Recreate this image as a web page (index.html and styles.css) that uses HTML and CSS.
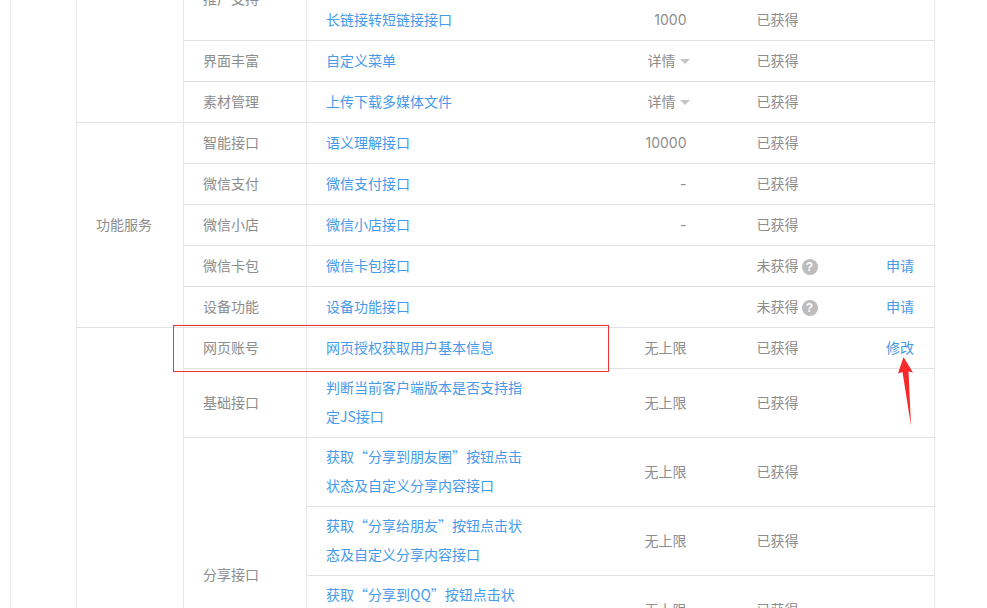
FILE: index.html
```html
<!DOCTYPE html>
<html lang="zh-CN">
<head>
<meta charset="utf-8">
<title>接口权限</title>
<link rel="stylesheet" href="styles.css">
</head>
<body>
<div class="page">
  <div class="panel">
    <table class="perm">
      <colgroup>
        <col class="c-cat"><col class="c-sub"><col class="c-name"><col class="c-quota"><col class="c-status"><col class="c-op">
      </colgroup>
      <tbody>
        <tr>
          <td class="cat" rowspan="4"></td>
          <td class="sub" rowspan="2">推广支持</td>
          <td class="name"><a href="#">生成带参数的二维码</a></td>
          <td class="quota num">100000</td><td class="status">已获得</td><td class="op"></td>
        </tr>
        <tr>
          <td class="name"><a href="#">长链接转短链接接口</a></td>
          <td class="quota num">1000</td><td class="status">已获得</td><td class="op"></td>
        </tr>
        <tr>
          <td class="sub">界面丰富</td>
          <td class="name"><a href="#">自定义菜单</a></td>
          <td class="quota detail">详情<i class="caret"></i></td><td class="status">已获得</td><td class="op"></td>
        </tr>
        <tr>
          <td class="sub">素材管理</td>
          <td class="name"><a href="#">上传下载多媒体文件</a></td>
          <td class="quota detail">详情<i class="caret"></i></td><td class="status">已获得</td><td class="op"></td>
        </tr>
        <tr>
          <td class="cat" rowspan="5">功能服务</td>
          <td class="sub">智能接口</td>
          <td class="name"><a href="#">语义理解接口</a></td>
          <td class="quota num">10000</td><td class="status">已获得</td><td class="op"></td>
        </tr>
        <tr>
          <td class="sub">微信支付</td>
          <td class="name"><a href="#">微信支付接口</a></td>
          <td class="quota num">-</td><td class="status">已获得</td><td class="op"></td>
        </tr>
        <tr>
          <td class="sub">微信小店</td>
          <td class="name"><a href="#">微信小店接口</a></td>
          <td class="quota num">-</td><td class="status">已获得</td><td class="op"></td>
        </tr>
        <tr>
          <td class="sub">微信卡包</td>
          <td class="name"><a href="#">微信卡包接口</a></td>
          <td class="quota"></td><td class="status">未获得<i class="help">?</i></td><td class="op"><a href="#">申请</a></td>
        </tr>
        <tr>
          <td class="sub">设备功能</td>
          <td class="name"><a href="#">设备功能接口</a></td>
          <td class="quota"></td><td class="status">未获得<i class="help">?</i></td><td class="op"><a href="#">申请</a></td>
        </tr>
        <tr>
          <td class="cat" rowspan="6"></td>
          <td class="sub">网页账号</td>
          <td class="name"><a href="#">网页授权获取用户基本信息</a></td>
          <td class="quota">无上限</td><td class="status">已获得</td><td class="op"><a href="#">修改</a></td>
        </tr>
        <tr>
          <td class="sub">基础接口</td>
          <td class="name"><a href="#">判断当前客户端版本是否支持指定JS接口</a></td>
          <td class="quota">无上限</td><td class="status">已获得</td><td class="op"></td>
        </tr>
        <tr>
          <td class="sub" rowspan="4">分享接口</td>
          <td class="name"><a href="#">获取“分享到朋友圈”按钮点击状态及自定义分享内容接口</a></td>
          <td class="quota">无上限</td><td class="status">已获得</td><td class="op"></td>
        </tr>
        <tr>
          <td class="name"><a href="#">获取“分享给朋友”按钮点击状态及自定义分享内容接口</a></td>
          <td class="quota">无上限</td><td class="status">已获得</td><td class="op"></td>
        </tr>
        <tr>
          <td class="name"><a href="#">获取“分享到QQ”按钮点击状态及自定义分享内容接口</a></td>
          <td class="quota">无上限</td><td class="status">已获得</td><td class="op"></td>
        </tr>
        <tr>
          <td class="name"><a href="#">获取“分享到腾讯微博”按钮点击状态及自定义分享内容接口</a></td>
          <td class="quota">无上限</td><td class="status">已获得</td><td class="op"></td>
        </tr>
      </tbody>
    </table>
  </div>
  <div class="mark-box"></div>
  <svg class="mark-arrow" width="24" height="74" viewBox="0 0 24 74" aria-hidden="true">
    <path d="M7.500 2 L2 18.500 L6.500 17 L15 71 L12.500 16.500 L17 17.500 Z" fill="#f9292b"/>
  </svg>
</div>
</body>
</html>
```
FILE: styles.css
```css
html, body {
  margin: 0;
  padding: 0;
  background: #fff;
}
.page {
  position: relative;
  width: 987px;
  height: 608px;
  overflow: hidden;
}
.panel {
  display: flow-root;
  width: 923px;
  height: 608px;
  margin-left: 10px;
  padding-left: 65px;
  border-left: 1px solid #e7e7eb;
  box-sizing: border-box;
}
.perm {
  width: 858px;
  margin-top: -42px;
  table-layout: fixed;
  border-collapse: collapse;
  font: 14px/29px "Noto Sans CJK SC", sans-serif;
  color: #8d8d8d;
}
.c-cat { width: 107px; }
.c-sub { width: 123px; }
.c-name { width: 238px; }
.c-quota { width: 163px; }
.c-status { width: 130px; }
.c-op { width: 97px; }
.perm td {
  height: 30px;
  padding: 4px 20px 6px 19px;
  box-sizing: content-box;
  vertical-align: middle;
  border-top: 1px solid #e2e2e4;
  border-bottom: 1px solid #e2e2e4;
}
.perm td.cat, .perm td.sub {
  border-left: 1px solid #e7e7eb;
  border-right: 1px solid #e7e7eb;
}
.perm td.op {
  border-right: 1px solid #e7e7eb;
  text-align: right;
}
.perm td.quota {
  padding-right: 21px;
  text-align: right;
}
.perm td.num { font-family: "Inter", "Noto Sans CJK SC", sans-serif; }
.perm td.detail { padding-right: 18px; }
.perm td.status { padding-left: 49px; padding-right: 0; }
.perm a {
  color: #459ae9;
  text-decoration: none;
}
.caret {
  display: inline-block;
  width: 0;
  height: 0;
  margin-left: 4px;
  vertical-align: 2px;
  border-style: solid;
  border-width: 5px 5px 0;
  border-color: #c4c4c4 transparent transparent;
}
.help {
  display: inline-block;
  width: 16px;
  height: 16px;
  margin-left: 3px;
  border-radius: 50%;
  background: #bdbdbd;
  color: #fff;
  font: bold 12px/16px "Liberation Sans", sans-serif;
  text-align: center;
  vertical-align: 0;
}
.mark-box {
  position: absolute;
  left: 173px;
  top: 325px;
  width: 434px;
  height: 45px;
  border: 1px solid #ec3337;
}
.mark-arrow {
  position: absolute;
  left: 896px;
  top: 355px;
}
```
